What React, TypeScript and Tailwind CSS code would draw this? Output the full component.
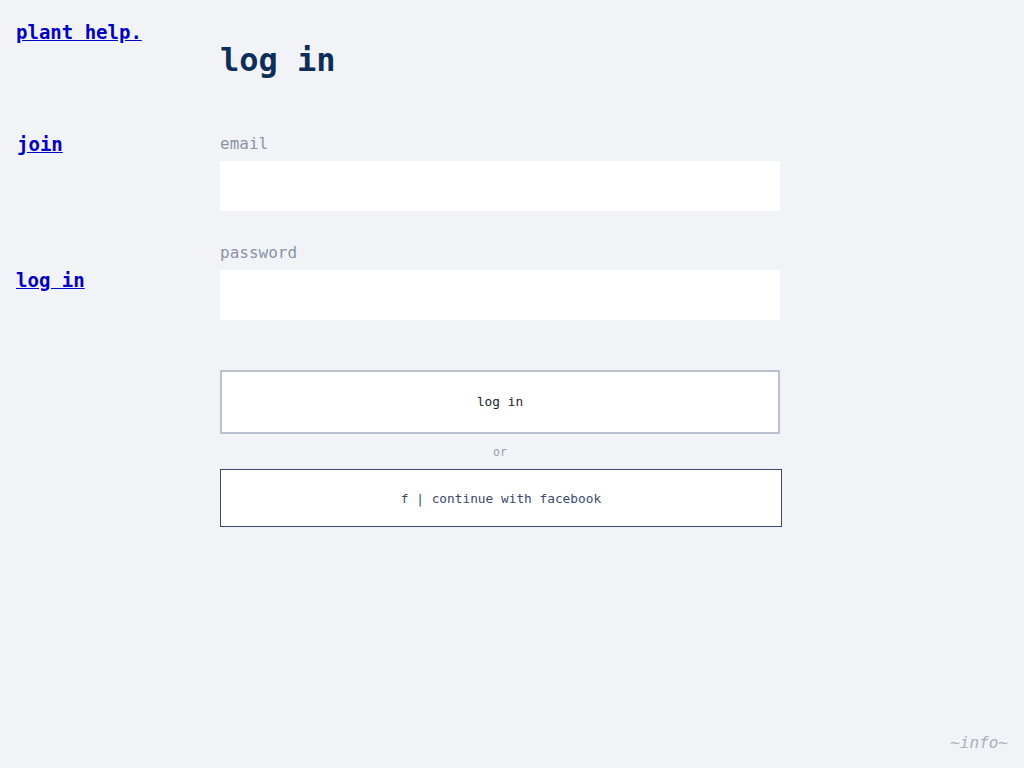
import React from 'react';

const mono = { fontFamily: '"DejaVu Sans Mono", "Liberation Mono", monospace' };

const Sidebar: React.FC = () => (
  <nav className="w-[220px] shrink-0 pl-4 flex flex-col">
    <a href="#" className="mt-[21px] text-[19px] leading-[23px] font-bold text-[#0000cc] underline">
      plant help.
    </a>
    <a href="#" className="mt-[89px] pl-px text-[19px] leading-[23px] font-bold text-[#0000cc] underline">
      join
    </a>
    <a href="#" className="mt-[113px] text-[19px] leading-[23px] font-bold text-[#0000cc] underline">
      log in
    </a>
  </nav>
);

const App: React.FC = () => {
  return (
    <div className="min-h-screen bg-[#f2f3f7] flex flex-col" style={mono}>
      <div className="flex">
        <Sidebar />
        <main className="flex flex-col pt-[41px]">
          <h1 className="text-[32px] leading-[38px] font-bold text-[#0b2f5a]">log in</h1>

          <label className="mt-[55px] text-[16px] leading-[20px] text-[#8a93a6]">email</label>
          <input type="email" className="mt-[7px] w-[560px] h-[50px] bg-white outline-none px-3" />

          <label className="mt-[32px] text-[16px] leading-[20px] text-[#8a93a6]">password</label>
          <input type="password" className="mt-[7px] w-[560px] h-[50px] bg-white outline-none px-3" />

          <button className="mt-[50px] w-[560px] h-[64px] bg-white border-2 border-[#b9c0d0] text-[12.8px] text-[#1f2430]">
            log in
          </button>

          <div className="w-[560px] mt-[11px] text-center text-[11.5px] leading-[14px] text-[#9aa1b0]">or</div>

          <button className="mt-[10px] w-[562px] h-[58px] pt-px bg-white border border-[#3b4a6b] text-[12.8px] text-[#3b4a6b]">
            f | continue with facebook
          </button>
        </main>
      </div>

      <footer className="mt-auto pr-4 pb-[15px] text-right text-[16px] leading-[20px] italic text-[#a9afbb]">
        ~info~
      </footer>
    </div>
  );
};

export default App;
